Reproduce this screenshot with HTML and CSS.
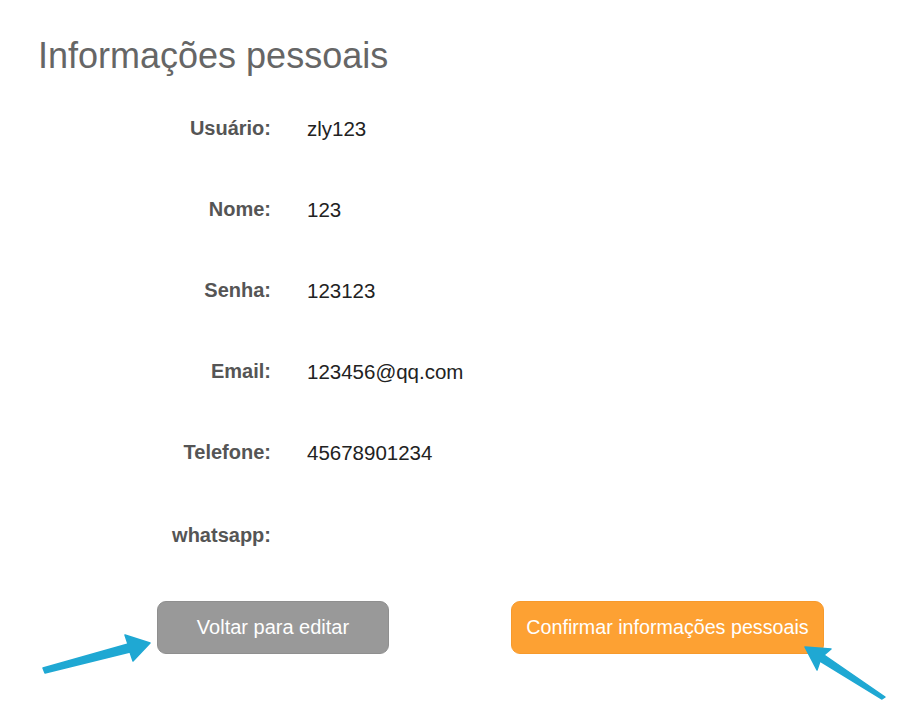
FILE: index.html
```html
<!DOCTYPE html>
<html lang="pt">
<head>
  <meta charset="UTF-8">
  <title>Informações pessoais</title>
  <link rel="stylesheet" href="styles.css">
</head>
<body>

  <main class="page">
    <h1 class="title">Informações pessoais</h1>

    <!-- dados do usuario -->
    <div class="info">
      <div class="row"><span class="label">Usuário:</span><span class="value">zly123</span></div>
      <div class="row"><span class="label">Nome:</span><span class="value">123</span></div>
      <div class="row"><span class="label">Senha:</span><span class="value">123123</span></div>
      <div class="row"><span class="label">Email:</span><span class="value">123456@qq.com</span></div>
      <div class="row"><span class="label">Telefone:</span><span class="value">45678901234</span></div>
      <div class="row row-last"><span class="label">whatsapp:</span><span class="value"></span></div>
    </div>

    <div class="actions">
      <button class="btn btn-back">Voltar para editar</button>
      <button class="btn btn-confirm">Confirmar informações pessoais</button>
    </div>
  </main>

  <!-- setas de anotacao -->
  <svg class="arrows" width="900" height="708" viewBox="0 0 900 708">
    <path d="M43,668 L128,644 L125,635 L150,643 L133,661 L130,652 L45,673 Z" />
    <path d="M805,647 L831,649 L824,655 L885,697 L882,699 L820,661 L817,670 Z" />
  </svg>

</body>
</html>
```

FILE: styles.css
```css
* {
  margin: 0;
  padding: 0;
  box-sizing: border-box;
}

body, html {
  width: 900px;
  height: 708px;
  background: #fff;
  font-family: 'Liberation Sans', Arial, sans-serif;
  overflow: hidden;
}

body {
  position: relative;
}

.page {
  padding: 34px 0 0 38px;
}

.title {
  font-size: 36px;
  font-weight: normal;
  color: #666;
  line-height: 43px;
  margin-bottom: 11px;
}

.row {
  display: grid;
  grid-template-columns: 233px 1fr;
  column-gap: 36px;
  align-items: center;
  height: 81px;
  font-size: 20px;
}

.row-last {
  padding-top: 4px;
}

.label {
  text-align: right;
  font-weight: bold;
  color: #555;
}

.value {
  color: #222;
  font-size: 20.5px;
}

.actions {
  display: flex;
  gap: 122px;
  margin: 27px 0 0 119px;
}

.btn {
  height: 53px;
  border: 1px solid #8f8f8f;
  border-radius: 9px;
  color: #fff;
  font-family: inherit;
  font-size: 20px;
  cursor: pointer;
}

.btn-back {
  width: 232px;
  background: #999;
}

.btn-confirm {
  width: 313px;
  background: #fda133;
  border-color: #f79a2c;
  font-size: 19.7px;
}

.arrows {
  position: absolute;
  top: 0;
  left: 0;
  pointer-events: none;
}

.arrows path {
  fill: #1fa8d3;
  stroke: #1fa8d3;
  stroke-width: 1.5;
  stroke-linejoin: round;
}
```
